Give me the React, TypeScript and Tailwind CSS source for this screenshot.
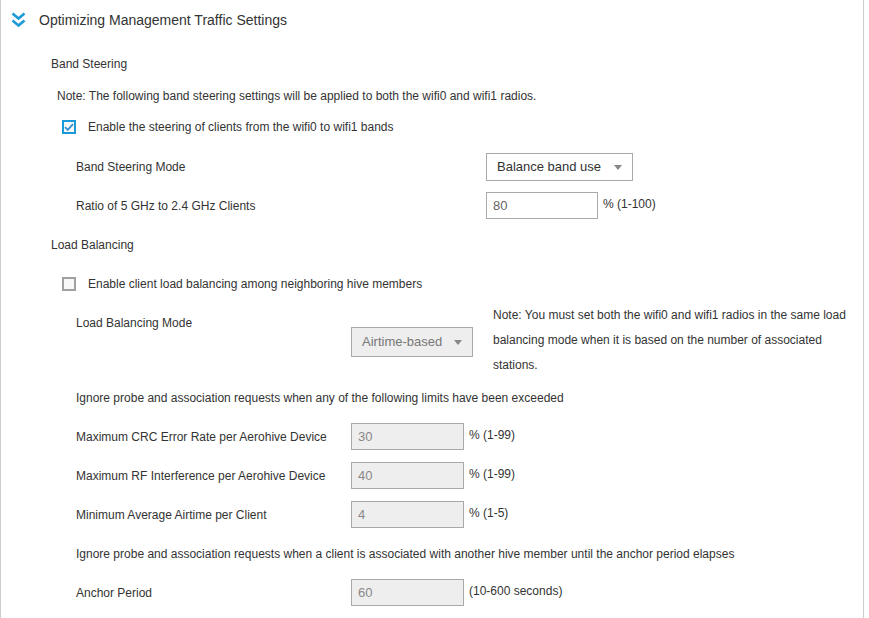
const font = { fontFamily: '"Liberation Sans", Arial, sans-serif' };

function Checkbox({ checked }: { checked: boolean }) {
  if (checked) {
    return (
      <span className="flex h-[14px] w-[14px] items-center justify-center border-2 border-[#1a9ad6] bg-[#f7f7f7]">
        <svg width="10" height="8" viewBox="0 0 10 8">
          <path d="M1 4.2 L3.8 6.8 L9 1.2" fill="none" stroke="#2f8fd0" strokeWidth="1.8" />
        </svg>
      </span>
    );
  }
  return <span className="block h-[14px] w-[14px] border-2 border-[#a0a0a0] bg-[#f8f8f8]" />;
}

function Caret() {
  return (
    <svg width="8" height="5" viewBox="0 0 8 5" className="shrink-0">
      <path d="M0 0 H8 L4 5 Z" fill="#888" />
    </svg>
  );
}

function TextBox({ value, disabled, width }: { value: string; disabled?: boolean; width: string }) {
  return (
    <div
      className={`flex h-[27px] items-center border border-[#a9a9a9] pl-[6px] text-[13px] ${width} ${
        disabled ? 'bg-[#eeeeee] text-[#888]' : 'bg-white text-[#666]'
      }`}
    >
      {value}
    </div>
  );
}

function LimitRow({ label, value, suffix, top }: { label: string; value: string; suffix: string; top: string }) {
  return (
    <div className={`flex items-center pl-[75px] ${top}`}>
      <span className="w-[275px]">{label}</span>
      <TextBox value={value} disabled width="w-[113px]" />
      <span className="-mt-[3px] ml-[5px]">{suffix}</span>
    </div>
  );
}

export default function App() {
  return (
    <div style={font} className="h-[618px] w-[864px] overflow-hidden border-x border-[#cccccc] bg-white text-[12px] leading-[20px] text-[#333]">
      {/* section header */}
      <div className="flex h-[40px] items-center">
        <svg width="15" height="16" viewBox="0 0 15 16" className="ml-[10px]">
          <path d="M1.5 1.5 L7.5 6.5 L13.5 1.5" fill="none" stroke="#1e9ad6" strokeWidth="2.6" />
          <path d="M1.5 8.5 L7.5 13.5 L13.5 8.5" fill="none" stroke="#1e9ad6" strokeWidth="2.6" />
        </svg>
        <span className="ml-[13px] text-[14px]">Optimizing Management Traffic Settings</span>
      </div>

      {/* band steering */}
      <div className="mt-[14px] pl-[50px]">Band Steering</div>
      <div className="mt-[12px] pl-[56px]">
        Note: The following band steering settings will be applied to both the wifi0 and wifi1 radios.
      </div>
      <div className="mt-[11px] flex items-center pl-[61px]">
        <Checkbox checked />
        <span className="ml-[12px]">Enable the steering of clients from the wifi0 to wifi1 bands</span>
      </div>
      <div className="mt-[16px] flex items-center pl-[75px]">
        <span className="w-[410px]">Band Steering Mode</span>
        <div className="flex h-[28px] w-[147px] items-center justify-between border border-[#a9a9a9] bg-white pl-[10px] pr-[10px] text-[13px]">
          <span>Balance band use</span>
          <Caret />
        </div>
      </div>
      <div className="mt-[11px] flex items-center pl-[75px]">
        <span className="w-[410px]">Ratio of 5 GHz to 2.4 GHz Clients</span>
        <TextBox value="80" width="w-[112px]" />
        <span className="-mt-[3px] ml-[5px]">% (1-100)</span>
      </div>

      {/* load balancing */}
      <div className="mt-[16px] pl-[50px]">Load Balancing</div>
      <div className="mt-[19px] flex items-center pl-[61px]">
        <Checkbox checked={false} />
        <span className="ml-[12px]">Enable client load balancing among neighboring hive members</span>
      </div>
      <div className="mt-[9px] flex h-[75px] pl-[75px]">
        <span className="mt-[10px] w-[275px]">Load Balancing Mode</span>
        <div className="mt-[24px] flex h-[30px] w-[122px] items-center justify-between border border-[#a9a9a9] bg-[#eeeeee] pl-[10px] pr-[10px] text-[13px] text-[#777]">
          <span>Airtime-based</span>
          <Caret />
        </div>
        <p className="ml-[20px] w-[360px] leading-[25px]">
          Note: You must set both the wifi0 and wifi1 radios in the same load balancing mode when it is based on the
          number of associated stations.
        </p>
      </div>
      <div className="mt-[10px] pl-[75px]">
        Ignore probe and association requests when any of the following limits have been exceeded
      </div>
      <LimitRow label="Maximum CRC Error Rate per Aerohive Device" value="30" suffix="% (1-99)" top="mt-[15px]" />
      <LimitRow label="Maximum RF Interference per Aerohive Device" value="40" suffix="% (1-99)" top="mt-[12px]" />
      <LimitRow label="Minimum Average Airtime per Client" value="4" suffix="% (1-5)" top="mt-[12px]" />
      <div className="mt-[16px] pl-[75px]">
        Ignore probe and association requests when a client is associated with another hive member until the anchor
        period elapses
      </div>
      <LimitRow label="Anchor Period" value="60" suffix="(10-600 seconds)" top="mt-[15px]" />
      <LimitRow label="" value="" suffix="" top="mt-[12px]" />
    </div>
  );
}
